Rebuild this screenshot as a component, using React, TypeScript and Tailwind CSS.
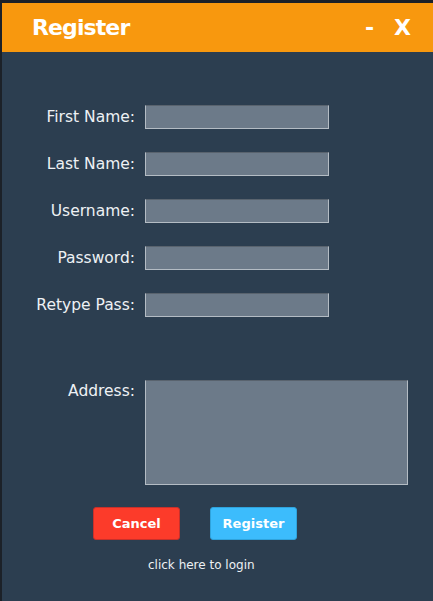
import React from 'react';

const fields = ['First Name:', 'Last Name:', 'Username:', 'Password:', 'Retype Pass:'];

const inputCls =
  'h-[24px] w-[184px] border border-[#b4bcc4] border-t-[#59636e] bg-[#6c7a89] outline-none';

export default function App() {
  return (
    <div
      className="flex h-[601px] w-[433px] flex-col bg-[#1c2128] pl-[2px] pt-[3px]"
      style={{ fontFamily: '"DejaVu Sans", Tahoma, sans-serif' }}
    >
      {/* Title bar */}
      <div className="flex h-[49px] shrink-0 items-center justify-between bg-[#f8980e] pl-[30px] pr-[22px] text-white">
        <span className="text-[22px] font-bold tracking-[-0.9px]">Register</span>
        <span className="flex items-center gap-[20px] text-[22px] font-bold">
          <span>-</span>
          <span>X</span>
        </span>
      </div>

      {/* Form */}
      <div className="flex flex-1 flex-col bg-[#2c3e50] pt-[53px] text-[#eef1f4]">
        <div className="flex flex-col gap-[23px]">
          {fields.map((f) => (
            <div key={f} className="grid grid-cols-[133px_auto] items-center gap-[10px]">
              <label className="text-right text-[15.5px] leading-[24px]">{f}</label>
              <input className={inputCls} type={f.includes('Pass') ? 'password' : 'text'} />
            </div>
          ))}
        </div>

        <div className="mt-[63px] grid grid-cols-[133px_auto] items-start gap-[10px]">
          <label className="pt-[1px] text-right text-[15.5px] leading-[20px]">Address:</label>
          <textarea className="h-[105px] w-[263px] resize-none border border-[#b4bcc4] border-t-[#59636e] bg-[#6c7a89] outline-none" />
        </div>

        <div className="mt-[22px] flex gap-[30px] pl-[91px]">
          <button className="h-[33px] w-[87px] rounded-[3px] border border-[#c9302a] bg-[#fc3b2a] pt-[1px] text-[13px] font-bold text-white">
            Cancel
          </button>
          <button className="h-[33px] w-[87px] rounded-[3px] border border-[#2fa3dc] bg-[#3cbcfc] pt-[1px] text-[13px] font-bold text-white">
            Register
          </button>
        </div>

        <div className="mt-[16px] pl-[146px] text-[12px] text-[#eef1f4]">click here to login</div>
      </div>
    </div>
  );
}
